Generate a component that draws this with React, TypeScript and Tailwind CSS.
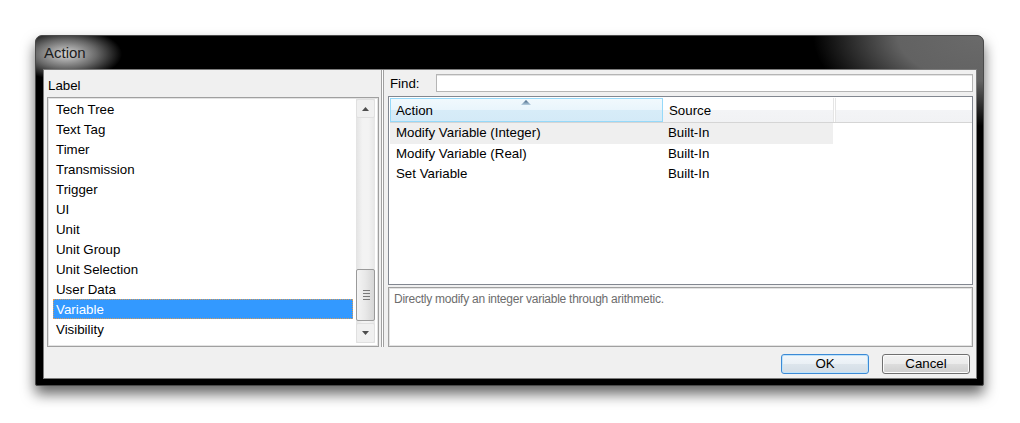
import React from 'react';

const labels = [
  'Tech Tree',
  'Text Tag',
  'Timer',
  'Transmission',
  'Trigger',
  'UI',
  'Unit',
  'Unit Group',
  'Unit Selection',
  'User Data',
  'Variable',
  'Visibility',
];

const rows = [
  { action: 'Modify Variable (Integer)', source: 'Built-In' },
  { action: 'Modify Variable (Real)', source: 'Built-In' },
  { action: 'Set Variable', source: 'Built-In' },
];

const ScrollBar = () => (
  <div className="w-[19px] flex flex-col bg-[linear-gradient(90deg,#e3e3e3,#f3f3f3_35%,#f3f3f3_65%,#e6e6e6)]">
    <div className="h-[19px] flex items-center justify-center rounded-[2px] border border-[#e0e0e0] bg-[#f0f0f0]">
      <svg width="7" height="4" viewBox="0 0 7 4">
        <path d="M0 4 L3.5 0 L7 4 Z" fill="#4d4d4d" />
      </svg>
    </div>
    <div className="flex-1" />
    <div className="h-[52px] rounded-[2px] border border-[#9a9a9a] bg-[linear-gradient(90deg,#f4f4f4,#e8e8e8_50%,#d6d6d6)] flex flex-col items-center justify-center gap-[2px] pl-[1px]">
      <div className="w-[7px] h-[1px] bg-[#7a7a7a]" />
      <div className="w-[7px] h-[1px] bg-[#7a7a7a]" />
      <div className="w-[7px] h-[1px] bg-[#7a7a7a]" />
      <div className="w-[7px] h-[1px] bg-[#7a7a7a]" />
    </div>
    <div className="h-[2px]" />
    <div className="h-[20px] flex items-center justify-center rounded-[2px] border border-[#e0e0e0] bg-[#f0f0f0]">
      <svg width="7" height="4" viewBox="0 0 7 4">
        <path d="M0 0 L3.5 4 L7 0 Z" fill="#4d4d4d" />
      </svg>
    </div>
  </div>
);

const App = () => {
  return (
    <div className="w-[1020px] h-[423px] bg-white pt-[35px] pl-[35px] font-['Liberation_Sans',Arial,sans-serif] text-[13.3px] text-black">
      <div className="w-[949px] h-[351px] rounded-t-[7px] rounded-b-[2px] border border-[#4a4a4a] bg-black bg-[radial-gradient(ellipse_56px_26px_at_30px_18px,rgba(215,215,215,1),rgba(160,160,160,0.65)_55%,rgba(0,0,0,0)_100%),radial-gradient(ellipse_170px_90px_at_100%_0%,#6a6a6a,#626262_50%,rgba(0,0,0,0)_100%)] shadow-[0_8px_14px_rgba(0,0,0,0.6)] flex flex-col pl-[7px] pr-[6px] pb-[6px]">
        <div className="h-[33px] flex items-center pl-[1px] pt-[2px] text-[15px] text-[#1c1c1c]">Action</div>

        <div className="flex-1 flex flex-col bg-[#f0f0f0] border border-[#7c7c7c]">
          <div className="flex h-[277px]">
            {/* left pane */}
            <div className="w-[337px] flex flex-col pl-[3px] pr-[2px]">
              <div className="h-[27px] pt-[8px] pl-[1px] leading-[15px]">Label</div>
              <div className="flex-1 border border-[#a0a0a0]">
                <div className="h-full border border-[#e3e3e3] bg-white flex pl-[4px] pr-[2px] pb-[2px]">
                  <div className="flex-1 flex flex-col">
                    {labels.map((l) =>
                      l === 'Variable' ? (
                        <div
                          key={l}
                          className="h-[20px] leading-[21px] pl-[3px] bg-[#3399ff] text-white outline outline-1 outline-dotted outline-[#d89c5a] -outline-offset-1"
                        >
                          {l}
                        </div>
                      ) : (
                        <div key={l} className="h-[20px] leading-[21px] pl-[3px]">
                          {l}
                        </div>
                      )
                    )}
                  </div>
                  <div className="w-[3px]" />
                  <ScrollBar />
                </div>
              </div>
            </div>

            {/* splitter */}
            <div className="w-[6px] flex">
              <div className="w-[1px] bg-[#a0a0a0]" />
              <div className="w-[1px] bg-white" />
              <div className="w-[1px] bg-[#a0a0a0]" />
            </div>

            {/* right pane */}
            <div className="flex-1 flex flex-col pl-[1px] pr-[3px]">
              <div className="h-[26px] flex items-start pt-[4px]">
                <div className="w-[48px] pl-[2px] pt-[2px] leading-[15px]">Find:</div>
                <div className="flex-1 h-[18px] border border-[#b5b5b5] bg-white shadow-[inset_0_1px_0_#e3e3e3]" />
              </div>

              <div className="h-[189px] border border-[#828790] bg-white flex flex-col">
                <div className="h-[25px] flex border-b border-[#d5d5d5] mt-[1px] ml-[1px]">
                  <div className="relative w-[273px] border border-[#96d9f9] bg-[linear-gradient(#f1f9fd_0%,#e9f5fc_50%,#d7ecf8_50%,#d4eaf7_100%)] pl-[5px] pt-[1px] flex items-center">
                    <svg className="absolute left-[130px] top-[1px]" width="10" height="5" viewBox="0 0 10 5">
                      <defs>
                        <linearGradient id="sa" x1="0" y1="0" x2="0" y2="1">
                          <stop offset="0" stopColor="#3c5d7e" />
                          <stop offset="1" stopColor="#b8d1e2" />
                        </linearGradient>
                      </defs>
                      <path d="M0 5 L5 0 L10 5 Z" fill="url(#sa)" />
                    </svg>
                    Action
                  </div>
                  <div className="w-[171px] border-r border-[#e5e5e5] bg-[linear-gradient(#ffffff_0%,#ffffff_50%,#f3f4f6_50%,#f1f2f4_100%)] pl-[6px] pt-[1px] flex items-center">
                    Source
                  </div>
                  <div className="flex-1 border-l border-[#e5e5e5] ml-[1px] bg-[linear-gradient(#ffffff_0%,#ffffff_50%,#f3f4f6_50%,#f1f2f4_100%)]" />
                </div>
                <div className="flex flex-col ml-[1px]">
                  {rows.map((r, i) => (
                    <div key={r.action} className={`leading-[20px] flex w-[443px] ${i === 0 ? 'bg-[#efefef] h-[21px]' : 'h-[20px]'}`}>
                      <div className="w-[273px] pl-[6px]">{r.action}</div>
                      <div className="pl-[5px]">{r.source}</div>
                    </div>
                  ))}
                </div>
              </div>

              <div className="h-[2px]" />

              <div className="h-[60px] border border-[#a0a0a0] bg-white">
                <div className="h-full border border-[#e3e3e3] pl-[4px] pt-[3px] text-[12px] tracking-[-0.25px] text-[#6d6d6d] leading-[15px]">
                  Directly modify an integer variable through arithmetic.
                </div>
              </div>
            </div>
          </div>

          {/* button row */}
          <div className="flex justify-end gap-[13px] pt-[7px] pr-[6px]">
            <button className="w-[88px] h-[20px] rounded-[3px] border border-[#3c8ad6] bg-[linear-gradient(#f3f7fb_0%,#eaf0f5_50%,#dde5ec_50%,#d3dde6_100%)] shadow-[inset_0_0_0_1px_#bfe3f9] leading-[18px]">
              OK
            </button>
            <button className="w-[88px] h-[20px] rounded-[3px] border border-[#707070] bg-[linear-gradient(#f2f2f2_0%,#ebebeb_50%,#dddddd_50%,#cfcfcf_100%)] shadow-[inset_0_0_0_1px_#fcfcfc] leading-[18px]">
              Cancel
            </button>
          </div>
        </div>
      </div>
    </div>
  );
};

export default App;
